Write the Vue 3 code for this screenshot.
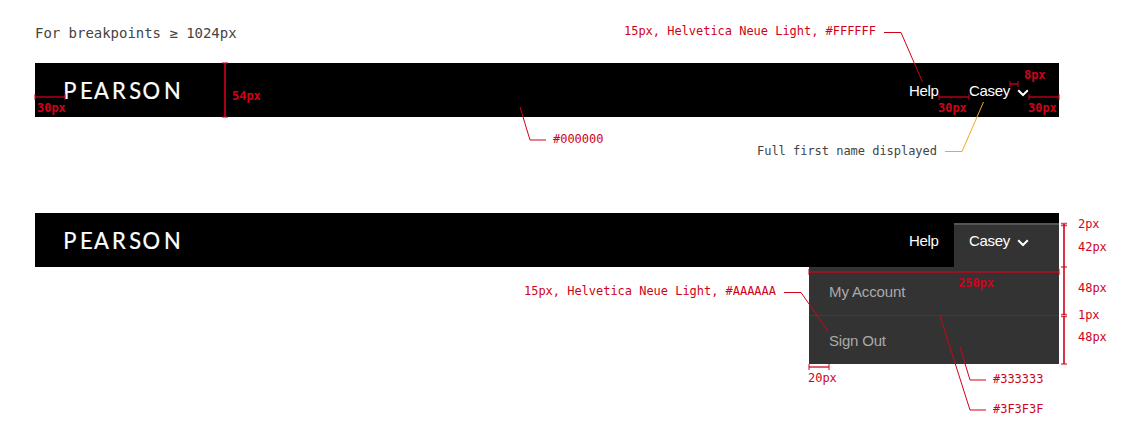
<script setup>
const bars = [{ open: false }, { open: true }]

const logo = 'PEARSON'
const logoX = [-2, 16.2, 31.3, 50.6, 69, 83.4, 106.6].join(' ')

const notes = [
  { x: 624, y: 35, t: '15px, Helvetica Neue Light, #FFFFFF' },
  { x: 553, y: 143, t: '#000000' },
  { x: 757, y: 155, t: 'Full first name displayed', c: 'plain' },
  { x: 524, y: 295, t: '15px, Helvetica Neue Light, #AAAAAA' },
  { x: 808, y: 382, t: '20px' },
  { x: 993, y: 383, t: '#333333' },
  { x: 993, y: 413, t: '#3F3F3F' },
  { x: 1078, y: 228, t: '2px' },
  { x: 1078, y: 251, t: '42px' },
  { x: 1078, y: 292, t: '48px' },
  { x: 1078, y: 319, t: '1px' },
  { x: 1078, y: 341, t: '48px' },
  { x: 37, y: 112, t: '30px', c: 'bold' },
  { x: 232, y: 100, t: '54px', c: 'bold' },
  { x: 938, y: 112, t: '30px', c: 'bold' },
  { x: 1024, y: 79, t: '8px', c: 'bold' },
  { x: 1028, y: 112, t: '30px', c: 'bold' },
  { x: 958, y: 287, t: '250px', c: 'bold' },
]

const leaders = [
  '884,32.5 901,32.5 922.5,82',
  '520,107 530,140 546,140',
  '784,292.5 801,292.5 828,331',
  '960,347 970,380 986,380',
  '940,316 970,410 986,410',
]

const horizontals = [
  [35, 65, 97],
  [939, 969, 97],
  [1010, 1018, 84],
  [1029, 1059, 97],
  [809, 1059, 272],
  [809, 829, 367],
]
</script>

<template>
  <main class="sheet">
    <h1 class="title">For breakpoints ≥ 1024px</h1>
    <header v-for="(bar, i) in bars" :key="i" class="bar">
      <svg class="logo" width="120" height="54" role="img" aria-label="Pearson">
        <text transform="scale(0.93 1)" :x="logoX" y="36.2">{{ logo }}</text>
      </svg>
      <nav class="nav">
        <span class="link help">Help</span>
        <span class="link user" :class="{ open: bar.open }">
          <span class="name">Casey</span>
          <svg class="chevron" width="12" height="8" viewBox="0 0 12 8">
            <path d="M1.2 1.2 6 6 10.8 1.2" />
          </svg>
        </span>
      </nav>
      <div v-if="bar.open" class="menu">
        <div class="item">My Account</div>
        <div class="item">Sign Out</div>
      </div>
    </header>

    <svg class="overlay" width="1144" height="446">
      <g class="rule">
        <g v-for="(h, i) in horizontals" :key="i">
          <path :d="`M${h[0]} ${h[2]}H${h[1]}`" />
          <path class="cap" :d="`M${h[0]} ${h[2] - 3}v6M${h[1]} ${h[2] - 3}v6`" />
        </g>
        <path class="tall" d="M225 63V117M1064 224V267M1064 267V315M1064 316V364" />
        <path
          class="cap"
          d="M222 63h6M222 117h6M1061 223.5h6M1061 225.5h6M1061 267h6M1061 314.5h6M1061 316.5h6M1061 364h6"
        />
      </g>
      <polyline v-for="p in leaders" :key="p" class="leader" :points="p" />
      <polyline class="leader amber" points="945,151.5 962,151.5 983.5,102" />
      <text
        v-for="(n, i) in notes"
        :key="i"
        class="note"
        :class="n.c"
        :x="n.x"
        :y="n.y"
        :textLength="n.t.length * 7.2"
      >{{ n.t }}</text>
    </svg>
  </main>
</template>

<style>
body {
  margin: 0;
  background: #fff;
}
</style>

<style scoped>
.sheet {
  position: relative;
  box-sizing: border-box;
  width: 1144px;
  height: 446px;
  padding: 23px 85px 0 35px;
  overflow: hidden;
}
.title {
  margin: 0 0 20px;
  height: 20px;
  font: 400 14px/20px "DejaVu Sans Mono", monospace;
  letter-spacing: -0.03px;
  color: #444;
}
.bar {
  position: relative;
  display: flex;
  justify-content: space-between;
  height: 54px;
  margin-bottom: 96px;
  padding-left: 30px;
  background: #000;
}
.logo {
  overflow: visible;
}
.logo text {
  font: 400 23.6px Lato, sans-serif;
  fill: #fff;
  stroke: #fff;
  stroke-width: 0.25;
}
.nav {
  display: flex;
  align-items: flex-end;
}
.link {
  box-sizing: border-box;
  height: 44px;
  padding-top: 7px;
  font: 15px/18px "Liberation Sans", Arial, sans-serif;
  letter-spacing: -0.3px;
  color: #fff;
  border-top: 2px solid transparent;
}
.help {
  width: 45px;
}
.user {
  display: flex;
  width: 105px;
  padding-left: 15px;
}
.user.open {
  background: #333;
  border-top-color: #555;
}
.name {
  width: 48px;
}
.chevron {
  margin-top: 7px;
}
.chevron path {
  fill: none;
  stroke: #fff;
  stroke-width: 2;
}
.menu {
  position: absolute;
  top: 54px;
  right: 0;
  width: 250px;
  background: #333;
}
.item {
  height: 48px;
  padding-left: 20px;
  font: 15px/50px "Liberation Sans", Arial, sans-serif;
  letter-spacing: -0.12px;
  color: #aaa;
}
.item + .item {
  border-top: 1px solid #3f3f3f;
  letter-spacing: -0.2px;
}
.overlay {
  position: absolute;
  inset: 0;
}
.rule path {
  fill: none;
  stroke: #d0021b;
  stroke-width: 1.5;
  opacity: 0.85;
}
.rule .tall {
  stroke-width: 2;
  opacity: 0.8;
}
.rule .cap {
  stroke-width: 1.4;
  opacity: 0.7;
}
.leader {
  fill: none;
  stroke: #d0021b;
  stroke-width: 1;
}
.leader.amber {
  stroke: #f5a623;
}
.note {
  font: 400 12px "DejaVu Sans Mono", monospace;
  fill: #d0021b;
}
.note.plain {
  fill: #444;
}
.note.bold {
  font-weight: 700;
}
</style>
